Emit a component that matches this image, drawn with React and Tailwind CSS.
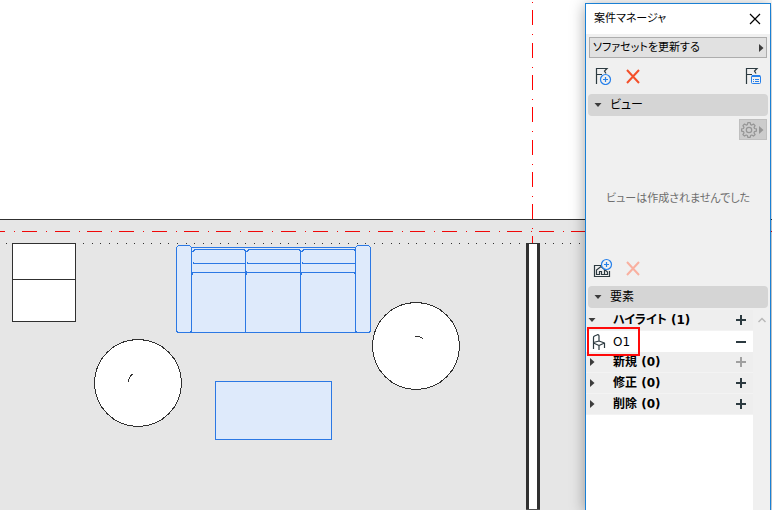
import { useState } from 'react';

const groups = [
  { label: 'ハイライト', open: true, canAdd: true, items: ['O1'] },
  { label: '新規', open: false, canAdd: false, items: [] },
  { label: '修正', open: false, canAdd: true, items: [] },
  { label: '削除', open: false, canAdd: true, items: [] },
];

const ArrowDown = () => (
  <svg className="w-2 h-2 shrink-0" viewBox="0 0 8 8" fill="#3c3c3c">
    <path d="M0.500 2h7L4 6z" />
  </svg>
);

const ArrowRight = ({ className }) => (
  <svg className={`w-2 h-2 shrink-0 ${className || ''}`} viewBox="0 0 8 8" fill="currentColor">
    <path d="M2 0v8L6.500 4z" />
  </svg>
);

const Cross = ({ color }) => (
  <svg className="w-4 h-4" viewBox="0 0 16 16" fill="none" stroke={color} strokeWidth={2}>
    <path d="M2 2l12 13M14 2L2 15" />
  </svg>
);

const FlagAdd = () => (
  <svg className="w-[18px] h-[18px]" viewBox="0 0 18 18" fill="none">
    <path d="M2.500 17V1.500H13L10.500 4l1.500 2.500M2.500 7.500H8" stroke="#2c3a40" strokeWidth={1.200} />
    <circle cx="11.500" cy="12.500" r="5" fill="#f0f0f0" stroke="#2680eb" strokeWidth={1.200} />
    <path d="M11.500 10v5M9 12.500h5" stroke="#2680eb" strokeWidth={1.200} />
  </svg>
);

const FlagList = () => (
  <svg className="w-[18px] h-[18px]" viewBox="0 0 18 18" fill="none">
    <path d="M2.500 17V1.500H13L10.500 4l1.500 2.500M2.500 7.500H8" stroke="#2c3a40" strokeWidth={1.200} />
    <rect x="7.500" y="8.500" width="9" height="8" rx="1" fill="#f0f0f0" stroke="#2680eb" />
    <path d="M8 9h8" stroke="#2680eb" strokeWidth={2} />
    <path d="M9 12.500h1M11 12.500h4M9 14.500h1M11 14.500h4" stroke="#2680eb" />
  </svg>
);

const ViewAdd = () => (
  <svg className="w-5 h-5" viewBox="0 0 20 20" fill="none">
    <path d="M8 7.500H1.500v11h15V13" stroke="#2c3a40" strokeWidth={1.200} />
    <path d="M3.500 16.500V12L8 8.500l3.500 3v5H8.500V13.500H6.500v3zM11.500 11.500l3 2.500v2.500h-3" stroke="#2c3a40" strokeWidth={1.200} />
    <circle cx="13.500" cy="6.500" r="5" fill="#f0f0f0" stroke="#2680eb" strokeWidth={1.200} />
    <path d="M13.500 4v5M11 6.500h5" stroke="#2680eb" strokeWidth={1.200} />
  </svg>
);

const Gear = () => (
  <svg className="w-4 h-4" viewBox="0 0 16 16" fill="none" stroke="#969696" strokeWidth={1.200} strokeLinejoin="round">
    <circle cx="8" cy="8" r="2.700" />
    <path d="M6.800 0.700h2.400l.4 1.900 1.200.5 1.700-1.100 1.600 1.600-1.100 1.700.5 1.200 1.900.4v2.300l-1.900.4-.5 1.200 1.100 1.700-1.600 1.600-1.700-1.100-1.200.5-.4 1.900H6.800l-.4-1.900-1.200-.5-1.700 1.100-1.600-1.600L3 10.800l-.5-1.200-1.900-.4V6.900l1.900-.4L3 5.300 1.900 3.600 3.500 2l1.700 1.100 1.200-.5z" />
  </svg>
);

const Chair = () => (
  <svg className="w-4 h-4" viewBox="0 0 16 16" fill="none" stroke="#2c3a40" strokeWidth={1.200} strokeLinejoin="round">
    <path d="M2.500 15V3.500Q2.500 2.500 3.500 2L6.500.700Q8 .5 8 2v5M2.500 8.500L8 7l5.500 2-5.500 2.500-5.500-2.500M8 11.500V16M13.500 9v5" />
  </svg>
);

const AddIcon = () => (
  <svg className="w-3 h-3" viewBox="0 0 12 12" stroke="currentColor" strokeWidth={2}>
    <path d="M6 1v10M1 6h10" />
  </svg>
);

const RemoveIcon = () => (
  <svg className="w-3 h-3" viewBox="0 0 12 12" stroke="currentColor" strokeWidth={2}>
    <path d="M1 6h10" />
  </svg>
);

const FloorPlan = () => (
  <svg
    className="col-start-1 row-start-1 w-full h-full"
    shapeRendering="crispEdges"
    fill="none"
    role="img"
    aria-label="平面図"
  >
    <rect x="0" y="219" width="100%" height="100%" fill="#e6e6e6" />
    <path d="M0 219.500H4000" stroke="#303030" />

    {/* Grid axes */}
    <path d="M-10 231.500H4000" stroke="#f00808" strokeDasharray="15 9 1 7.300" />
    <path d="M532.500 -22V243" stroke="#ff0000" strokeDasharray="15 9 1 7.300" />
    <path d="M6 243.500H4000" stroke="#303030" strokeDasharray="1 7.550" />

    {/* Cabinet */}
    <rect x="12.500" y="243.500" width="63" height="78" fill="#fff" stroke="#303030" />
    <path d="M12 279.500h63" stroke="#303030" />

    {/* Wall */}
    <rect x="526" y="243" width="14" height="266" fill="#303030" />
    <rect x="529" y="244" width="8" height="265" fill="#fff" />
    <path d="M526 509.500h14" stroke="#505050" />

    {/* Sofa */}
    <g stroke="#2b78e4" fill="#deeafb">
      <rect x="190.500" y="247.500" width="166" height="85" />
      <rect x="176.500" y="245.500" width="15" height="87" rx="3" />
      <rect x="355.500" y="245.500" width="15" height="87" rx="3" />
      <path d="M191.500 272.500H355.500M191.500 249v83M245.500 251v81M300.500 251v81M355.500 249v83" />
      <path d="M192 251.500h1v-1h1v-1h50v1h1v1h2v-1h1v-1h51v1h1v1h2v-1h1v-1h51v1h1v1M193 262v1.500h51v-1M247 262v1.500h52v-1M302 262v1.500h53v-1" fill="none" />
      <path d="M192.500 273v2M246.500 271v4M301.500 272v3M354.500 272v2" />
    </g>

    {/* Coffee table */}
    <rect x="215.500" y="381.500" width="116" height="58" fill="#deeafb" stroke="#2b78e4" />

    {/* Stools */}
    <g stroke="#303030">
      <circle cx="138" cy="383" r="43.500" fill="#fff" />
      <circle cx="416" cy="346" r="43.500" fill="#fff" />
      <path d="M128.500 382q.5-5 4-8M415 336.500q4-.5 8 2" />
    </g>
  </svg>
);

const SectionHeader = ({ title }) => (
  <button type="button" className="flex items-center gap-2 h-[22px] mx-0.5 px-1.5 rounded bg-[#d5d5d5] text-left">
    <ArrowDown />
    <span>{title}</span>
  </button>
);

const ElementGroup = ({ group }) => (
  <li className="flex flex-col">
    <div className="flex items-center h-[21px] bg-[#eeeeee] border-b border-[#f3f3f3]">
      <button type="button" className="flex flex-1 items-center h-full pl-0.5 gap-[17px] text-left font-bold">
        {group.open ? <ArrowDown /> : <ArrowRight className="text-[#3c3c3c]" />}
        <span>{group.label} ({group.items.length})</span>
      </button>
      <button
        type="button"
        aria-label={`${group.label}に追加`}
        disabled={!group.canAdd}
        className="flex items-center justify-center w-6 h-full text-[#2c3a40] disabled:text-[#a0a0a0]"
      >
        <AddIcon />
      </button>
    </div>
    {group.open && group.items.map((item) => (
      <div key={item} className="flex items-center h-[21px] bg-white">
        <div className="flex flex-1">
          {/* Callout frame, runs over the rows above and below */}
          <div className="flex items-center gap-1.5 w-[53px] h-[29px] -my-1 ml-px pl-0.5 border-2 border-[#ff0a0a] relative">
            <Chair />
            <span>{item}</span>
          </div>
        </div>
        <button type="button" aria-label={`${item}を除外`} className="flex items-center justify-center w-6 h-full text-[#2c3a40]">
          <RemoveIcon />
        </button>
      </div>
    ))}
  </li>
);

const IssueManager = () => {
  const [issue, setIssue] = useState('ソファセットを更新する');

  return (
    <aside className="col-start-1 row-start-1 justify-self-end flex flex-col w-[186px] mt-[3px] mr-px border border-b-0 border-[#1a80d4] bg-[#f0f0f0] shadow-[0_2px_14px_0_rgba(0,0,0,0.36)]">
      <header className="flex items-center justify-between h-[30px] pl-2 pr-[7px] bg-white text-[11px]">
        <h1>案件マネージャ</h1>
        <button type="button" aria-label="閉じる" className="flex items-center justify-center w-4 h-4">
          <svg className="w-3 h-3" viewBox="0 0 12 12" stroke="#000" strokeWidth={1.200}>
            <path d="M1 1l10 10M11 1L1 11" />
          </svg>
        </button>
      </header>

      <div className="grid mx-[3px] mt-[3px] text-[11px]">
        <select
          aria-label="案件"
          value={issue}
          onChange={(e) => setIssue(e.target.value)}
          className="col-start-1 row-start-1 appearance-none h-[21px] pl-[3px] border border-[#adadad] bg-[#e1e1e1]"
        >
          <option>ソファセットを更新する</option>
        </select>
        <ArrowRight className="col-start-1 row-start-1 self-center justify-self-end mr-0.5 text-[#3c3c3c] pointer-events-none" />
      </div>

      <div className="flex items-center gap-[13px] h-9 px-2">
        <button type="button" aria-label="新規案件"><FlagAdd /></button>
        <button type="button" aria-label="案件を削除"><Cross color="#f4502a" /></button>
        <button type="button" aria-label="案件の詳細" className="ml-auto"><FlagList /></button>
      </div>

      <SectionHeader title="ビュー" />
      <div className="flex flex-col h-[170px] p-[3px]">
        <button
          type="button"
          aria-label="ビュー設定"
          disabled
          className="flex items-center self-end h-[21px] w-7 pl-px border border-[#bfbfbf] bg-[#cccccc] text-[#969696]"
        >
          <Gear />
          <ArrowRight />
        </button>
        <p className="flex-1 flex items-center justify-center pt-1 text-[11px] text-[#6d6d6d]">ビューは作成されませんでした</p>
        <div className="flex items-center gap-3 h-[30px] px-1">
          <button type="button" aria-label="ビューを追加"><ViewAdd /></button>
          <button type="button" aria-label="ビューを削除" disabled><Cross color="#f9b0a0" /></button>
        </div>
      </div>

      <SectionHeader title="要素" />
      <div className="flex flex-1 mt-0.5 bg-white">
        <ul className="flex-1">
          {groups.map((group) => (
            <ElementGroup key={group.label} group={group} />
          ))}
        </ul>
        <div className="w-[17px] pt-1.5 flex justify-center bg-[#f0f0f0]">
          <svg className="w-2 h-2" viewBox="0 0 8 8" fill="none" stroke="#b8b8b8" strokeWidth={1.500}>
            <path d="M0.500 6L4 2.500 7.500 6" />
          </svg>
        </div>
      </div>
    </aside>
  );
};

const App = () => (
  <main className="grid min-h-screen overflow-hidden bg-white font-['DejaVu_Sans','Noto_Sans_CJK_JP',sans-serif] text-[12px] leading-4 text-black [font-feature-settings:'palt']">
    <FloorPlan />
    <IssueManager />
  </main>
);

export default App;
